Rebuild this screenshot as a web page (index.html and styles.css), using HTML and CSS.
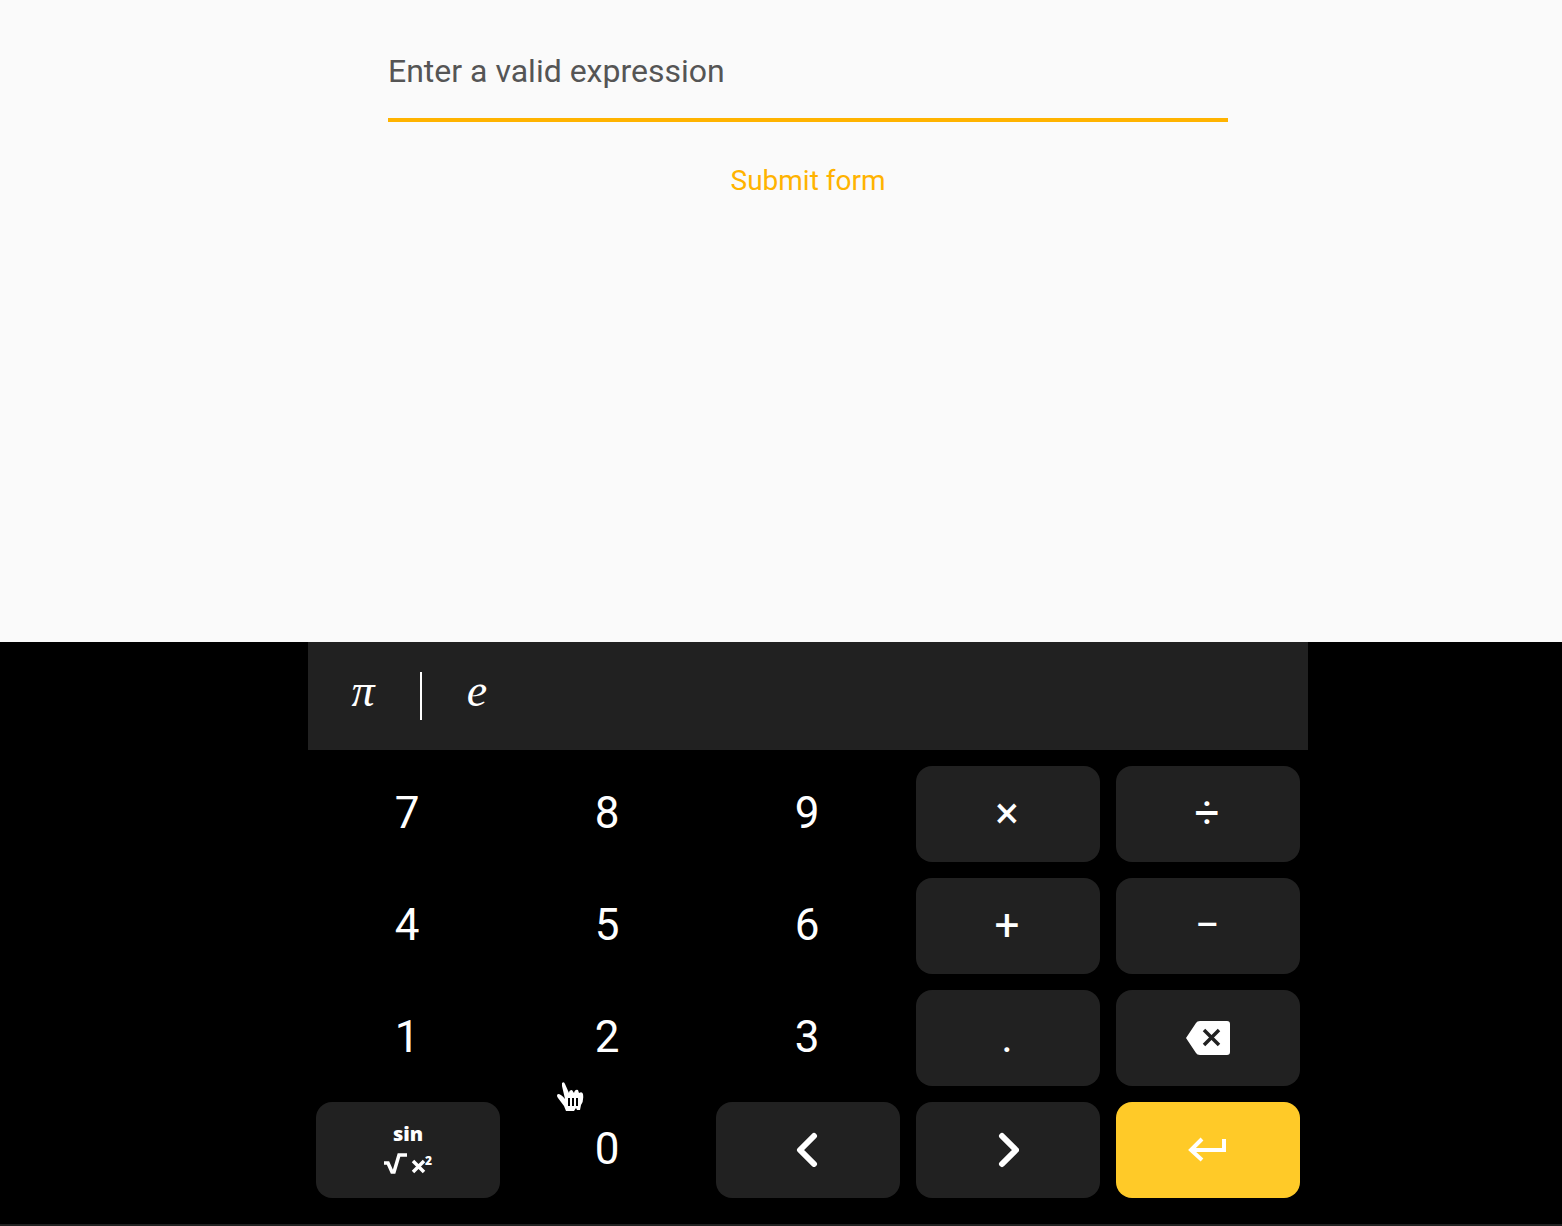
FILE: index.html
```html
<!DOCTYPE html>
<html lang="en">
<head>
<meta charset="utf-8">
<meta name="viewport" content="width=device-width, initial-scale=1">
<title>Math input</title>
<link rel="stylesheet" href="styles.css">
</head>
<body>
<main class="page">
  <form class="form">
    <input class="field" type="text" aria-label="Expression" placeholder="Enter a valid expression">
    <button class="submit" type="submit">Submit form</button>
  </form>
  <section class="keyboard" aria-label="Math keyboard">
    <div class="symbols">
      <button class="symbol" type="button">π</button>
      <button class="symbol" type="button">e</button>
    </div>
    <div class="keys">
      <button class="key" type="button">7</button>
      <button class="key" type="button">8</button>
      <button class="key" type="button">9</button>
      <button class="key tonal" type="button">×</button>
      <button class="key tonal" type="button">÷</button>
      <button class="key" type="button">4</button>
      <button class="key" type="button">5</button>
      <button class="key" type="button">6</button>
      <button class="key tonal" type="button">+</button>
      <button class="key tonal" type="button">−</button>
      <button class="key" type="button">1</button>
      <button class="key" type="button">2</button>
      <button class="key" type="button">3</button>
      <button class="key tonal" type="button">.</button>
      <button class="key tonal icon" type="button" aria-label="Backspace">
        <svg width="44" height="34" viewBox="0 0 44 34"><path fill="#fff" d="M14 0h27q3 0 3 3v28q0 3-3 3H14q-3 0-4-2L0 17 10 2q1-2 4-2z"/><path d="M18 9l15 15M33 9L18 24" fill="none" stroke="#212121" stroke-width="3.5"/></svg>
      </button>
      <button class="key tonal icon" type="button" aria-label="Functions">
        <svg width="50" height="56" viewBox="0 0 50 56" fill="none" stroke="#fff"><text class="fn" x="25" y="19" text-anchor="middle">sin</text><path d="M1 41h4l4 9h2l5-17h8" stroke-width="3.5"/><path d="M30 39l11 11M41 39L30 50" stroke-width="3.5"/><text class="power" x="42" y="43">2</text></svg>
      </button>
      <button class="key" type="button">0</button>
      <button class="key tonal" type="button" aria-label="Move left">
        <svg width="22" height="36" viewBox="0 0 22 36"><path d="M18 5L4 19l14 14" fill="none" stroke="#fff" stroke-width="6" stroke-linecap="round" stroke-linejoin="round"/></svg>
      </button>
      <button class="key tonal icon" type="button" aria-label="Move right">
        <svg width="22" height="36" viewBox="0 0 22 36"><path d="M5 4l14 14L5 32" fill="none" stroke="#fff" stroke-width="6" stroke-linecap="round" stroke-linejoin="round"/></svg>
      </button>
      <button class="key accent" type="button" aria-label="Enter">
        <svg width="38" height="26" viewBox="0 0 38 26"><path d="M36 3v11H4M14 3L3 14l11 10" fill="none" stroke="#fff" stroke-width="4"/></svg>
      </button>
    </div>
    <svg class="pointer" width="28" height="30" viewBox="0 0 28 30" aria-hidden="true"><path fill="#fff" d="M5 1q2-2 3 1l4 9q0-3 3-3l2 3q1-4 4-3l1 3q3-2 4 1 1 7-2 11l-1 5h-3l-1-2-2 3H9L7 24 1 16q-2-3 0-4 3 0 7 5L5 4z"/><path d="M12 16v8M16 16v8M20 16v8" stroke="#000" stroke-width="2"/></svg>
  </section>
</main>
</body>
</html>
```
FILE: styles.css
```css
* {
  box-sizing: border-box;
}

body {
  margin: 0;
  background: #fafafa;
  font-family: Roboto, "Liberation Sans", sans-serif;
}

button,
input {
  margin: 0;
  padding: 0;
  border: 0;
  background: none;
  font: inherit;
}

svg {
  display: block;
}

.page {
  min-height: 100vh;
  display: flex;
  flex-direction: column;
  justify-content: space-between;
}

.form {
  display: flex;
  flex-direction: column;
  align-items: center;
  gap: 36px;
  padding: 24px 0 24px 54px;
}

.field {
  width: 100%;
  max-width: 840px;
  height: 98px;
  border-bottom: 4px solid #ffb300;
  color: #212121;
  font-size: 32px;
  outline: none;
}

.field::placeholder {
  color: #555;
  opacity: 1;
}

.submit {
  color: #ffb300;
  font-size: 28px;
  line-height: 46px;
}

.keyboard {
  position: relative;
  display: flex;
  flex-direction: column;
  align-items: center;
  padding-left: 54px;
  background: #000;
  border-bottom: 2px solid #212121;
}

.symbols {
  display: flex;
  align-items: center;
  width: 100%;
  max-width: 1000px;
  height: 108px;
  background: #212121;
}

.symbol {
  width: 112px;
  height: 48px;
  padding: 0 2px 10px 0;
  color: #fff;
  font: italic 46px/38px "Liberation Serif", serif;
}

.symbol + .symbol {
  width: 114px;
  border-left: 2px solid #fff;
}

.keys {
  display: grid;
  grid-template-columns: repeat(5, 1fr);
  gap: 16px;
  width: 100%;
  max-width: 1000px;
  padding: 16px 8px 26px;
}

.key {
  display: flex;
  align-items: center;
  justify-content: center;
  height: 96px;
  padding: 0 2px 2px 0;
  border-radius: 16px;
  color: #fff;
  font-size: 44px;
}

.icon {
  padding: 0;
}

.tonal {
  background: #212121;
}

.accent {
  background: #ffca28;
}

.fn,
.power {
  fill: #fff;
  stroke: none;
  font-family: "Open Sans", sans-serif;
  font-weight: 800;
  font-size: 20px;
}

.power {
  font-size: 12px;
}

.pointer {
  position: absolute;
  left: 557px;
  top: 440px;
}
```
